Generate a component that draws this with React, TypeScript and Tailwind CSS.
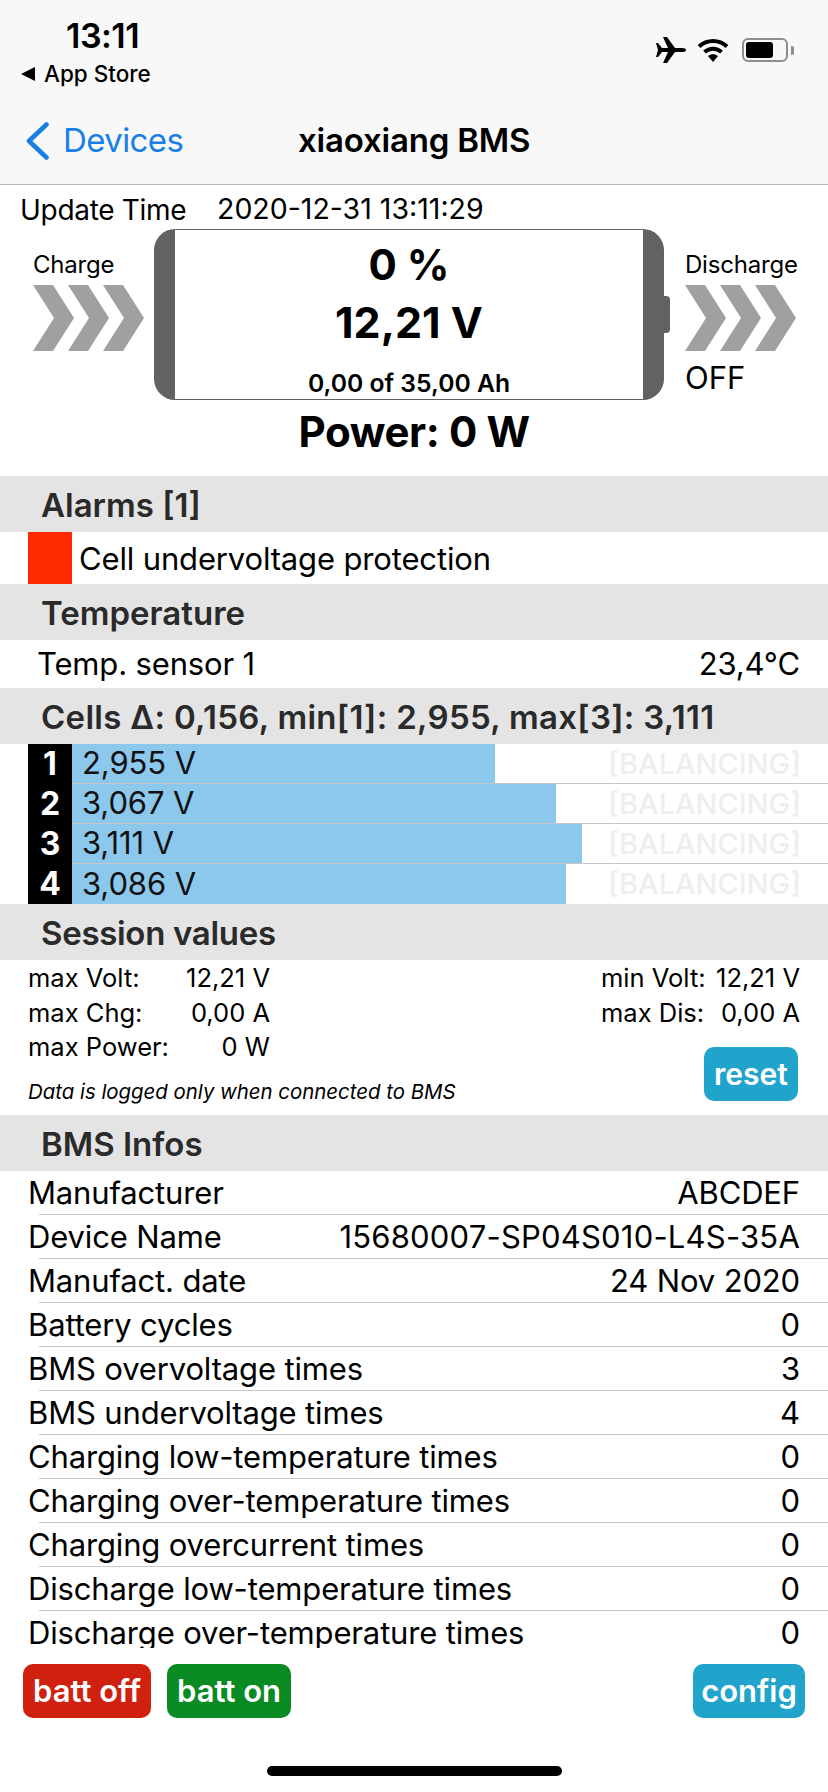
const cells = [
  { id: 1, volts: "2,955 V", width: 423 },
  { id: 2, volts: "3,067 V", width: 484 },
  { id: 3, volts: "3,111 V", width: 510 },
  { id: 4, volts: "3,086 V", width: 494 },
];

const infos = [
  ["Manufacturer", "ABCDEF"],
  ["Device Name", "15680007-SP04S010-L4S-35A"],
  ["Manufact. date", "24 Nov 2020"],
  ["Battery cycles", "0"],
  ["BMS overvoltage times", "3"],
  ["BMS undervoltage times", "4"],
  ["Charging low-temperature times", "0"],
  ["Charging over-temperature times", "0"],
  ["Charging overcurrent times", "0"],
  ["Discharge low-temperature times", "0"],
  ["Discharge over-temperature times", "0"],
];

function Chevrons() {
  return (
    <svg width="112" height="66" viewBox="0 0 112 66" className="block">
      <path d="M0 0H20L41 33L20 66H0L21 33Z" fill="#a0a0a0" />
      <path d="M35 0H55L76 33L55 66H35L56 33Z" fill="#a0a0a0" />
      <path d="M70 0H90L111 33L90 66H70L91 33Z" fill="#a0a0a0" />
    </svg>
  );
}

function StatusIcons() {
  return (
    <div className="flex items-center">
      <svg width="30" height="26" viewBox="0 0 30 26" className="block">
        <path d="M0 6H2L6 11H12L7 0H11L19 11H26Q30 11 30 13Q30 15 26 15H19L11 26H7L12 15H6L2 20H0L2 13Z" fill="#000" />
      </svg>
      <svg width="32" height="24" viewBox="0 0 32 24" className="block ml-[11px]">
        <path d="M2 8.500C10 1 22 1 30 8.500" fill="none" stroke="#000" strokeWidth="4" />
        <path d="M7.500 14C12.500 9.500 19.500 9.500 24.500 14" fill="none" stroke="#000" strokeWidth="4" />
        <path d="M11 18C14 15.500 18 15.500 21 18L16 24Z" fill="#000" />
      </svg>
      <div className="ml-[13px] w-[46px] h-[24px] rounded-[6px] border-2 border-[#8e8e8e] p-[2px]">
        <div className="w-[27px] h-full rounded-[3px] bg-black" />
      </div>
      <div className="ml-[3px] w-[3px] h-[9px] rounded-r-[2px] bg-[#8e8e8e]" />
    </div>
  );
}

function SectionHeader({ title, className = "" }: { title: string; className?: string }) {
  return (
    <div className={`h-[56px] bg-[#e4e4e4] pl-[41px] pt-[3px] flex items-center text-[33px] font-semibold text-[#2a2a2a] ${className}`}>
      {title}
    </div>
  );
}

export default function App() {
  return (
    <div className="w-[828px] h-[1792px] bg-white flex flex-col overflow-hidden text-black font-[family-name:Inter,sans-serif]">
      {/* nav */}
      <div className="h-[185px] shrink-0 bg-[#f8f8f8] border-b border-[#b8b8b8]">
        <div className="flex justify-between pl-[21px] pr-[34px] pt-[15px]">
          <div>
            <div className="pl-[45px] text-[34px] leading-[42px] font-semibold tracking-[-0.5px]">13:11</div>
            <div className="flex items-center mt-[1px] text-[22.500px] leading-[32px] font-medium">
              <span className="w-0 h-0 border-y-[7px] border-y-transparent border-r-[14px] border-r-black mr-[9px]" />
              App Store
            </div>
          </div>
          <div className="pt-[22px]">
            <StatusIcons />
          </div>
        </div>
        <div className="relative flex items-center h-[40px] mt-[31px] pl-[25px]">
          <svg width="25" height="38" viewBox="0 0 25 38" className="block">
            <path d="M21.500 2.500L4 19L21.500 35.500" fill="none" stroke="#1a7fe4" strokeWidth="4.600" strokeLinecap="round" strokeLinejoin="round" />
          </svg>
          <span className="ml-[13px] text-[33px] text-[#1a7fe4] tracking-[-0.6px]">Devices</span>
          <span className="absolute left-[298px] text-[33px] font-semibold tracking-[-0.2px]">xiaoxiang BMS</span>
        </div>
      </div>

      {/* update time */}
      <div className="flex items-center h-[44px] pl-[20px] pt-[5px] text-[28px] tracking-[-0.3px] shrink-0">
        <span className="w-[197px]">Update Time</span>
        <span className="text-[28.500px] tracking-normal">2020-12-31 13:11:29</span>
      </div>

      {/* battery */}
      <div className="flex shrink-0 h-[171px]">
        <div className="w-[154px] pl-[33px] pt-[20px]">
          <div className="text-[24px] leading-[32px] mb-[4px] tracking-[-0.2px]">Charge</div>
          <Chevrons />
        </div>
        <div className="flex items-center">
          <div className="w-[21px] h-[171px] bg-[#616362] rounded-l-[22px]" />
          <div className="w-[468px] h-[171px] border-y border-[#616362] flex flex-col items-center font-bold">
            <div className="text-[42px] leading-[52px] mt-[9px]">0 %</div>
            <div className="text-[43px] leading-[52px] mt-[5px]">12,21 V</div>
            <div className="text-[24.700px] leading-[30px] mt-[20px] font-semibold">0,00 of 35,00 Ah</div>
          </div>
          <div className="w-[21px] h-[171px] bg-[#616362] rounded-r-[22px]" />
          <div className="w-[6px] h-[37px] bg-[#616362] rounded-r-[4px]" />
        </div>
        <div className="pl-[15px] pt-[20px]">
          <div className="text-[24px] leading-[32px] mb-[4px] tracking-[-0.2px]">Discharge</div>
          <Chevrons />
          <div className="text-[31px] leading-[36px] mt-[9px]">OFF</div>
        </div>
      </div>

      {/* power */}
      <div className="h-[76px] shrink-0 pt-[4px] text-center text-[42px] leading-[56px] font-bold tracking-[-0.4px]">
        Power: 0 W
      </div>

      <SectionHeader title="Alarms [1]" />
      <div className="flex items-center h-[52px] pl-[28px] text-[31px] tracking-[-0.15px]">
        <div className="w-[44px] h-full bg-[#ff2a00]" />
        <span className="ml-[7px] pt-[3px]">Cell undervoltage protection</span>
      </div>

      <SectionHeader title="Temperature" />
      <div className="flex items-center justify-between h-[48px] pl-[37px] pr-[28px] text-[31px] tracking-[-0.15px]">
        <span>Temp. sensor 1</span>
        <span>23,4°C</span>
      </div>

      <SectionHeader title="Cells Δ: 0,156, min[1]: 2,955, max[3]: 3,111" className="tracking-[0.3px]" />
      <div className="flex flex-col">
        {cells.map((cell, index) => (
          <div key={cell.id} className="flex h-[40px] pl-[28px]">
            <div className="w-[44px] bg-black text-white text-[32px] font-bold flex items-center justify-center">{cell.id}</div>
            <div className={`flex-1 flex ${index < 3 ? "border-b border-[#c4c8cc]" : ""}`}>
              <div
                className="bg-[#8cc8ec] flex items-center pl-[10px] text-[31px] tracking-[-0.1px] text-[#111]"
                style={{ width: cell.width }}
              >
                {cell.volts}
              </div>
              <div className="flex-1 flex items-center justify-end pr-[27px] text-[29px] font-medium text-[#eeeef2]">[BALANCING]</div>
            </div>
          </div>
        ))}
      </div>

      <SectionHeader title="Session values" className="tracking-[-0.3px]" />
      <div className="h-[155px] shrink-0 flex justify-between pl-[28px] pr-[28px] pt-[1px]">
        <div>
          <div className="w-[242px] text-[25.500px] leading-[34.500px]">
            <div className="flex justify-between"><span>max Volt:</span><span>12,21 V</span></div>
            <div className="flex justify-between"><span>max Chg:</span><span>0,00 A</span></div>
            <div className="flex justify-between"><span>max Power:</span><span>0 W</span></div>
          </div>
          <div className="mt-[14px] text-[20.400px] leading-[26px] italic">Data is logged only when connected to BMS</div>
        </div>
        <div className="flex flex-col items-end">
          <div className="w-[199px] text-[25.500px] leading-[34.500px]">
            <div className="flex justify-between"><span>min Volt:</span><span>12,21 V</span></div>
            <div className="flex justify-between"><span>max Dis:</span><span>0,00 A</span></div>
          </div>
          <div className="mt-[17px] w-[94px] h-[54px] mr-[2px] rounded-[10px] bg-[#21a4cc] text-white text-[30px] font-semibold flex items-center justify-center">reset</div>
        </div>
      </div>

      <SectionHeader title="BMS Infos" />
      <div className="h-[477px] shrink-0 overflow-hidden">
        {infos.map(([label, value]) => (
          <div key={label} className="h-[44px] pl-[28px] relative flex items-center justify-between pr-[28px] text-[31px] tracking-[-0.15px]">
            <span>{label}</span>
            <span className={label === "Device Name" ? "tracking-[0.2px]" : ""}>{value}</span>
            {label !== "Discharge over-temperature times" && (
              <div className="absolute left-[39px] right-0 bottom-0 h-px bg-[#c8c8c8]" />
            )}
          </div>
        ))}
      </div>

      {/* bottom buttons */}
      <div className="flex mt-[16px] h-[54px] pl-[23px] pr-[23px] text-white text-[31px] font-semibold">
        <div className="w-[128px] rounded-[10px] bg-[#cf2010] flex items-center justify-center">batt off</div>
        <div className="w-[124px] ml-[16px] rounded-[10px] bg-[#0a8a22] flex items-center justify-center">batt on</div>
        <div className="w-[112px] ml-auto rounded-[10px] bg-[#21a4cc] flex items-center justify-center">config</div>
      </div>

      <div className="w-[295px] h-[10px] rounded-full bg-black mt-[48px] ml-[267px]" />
    </div>
  );
}
